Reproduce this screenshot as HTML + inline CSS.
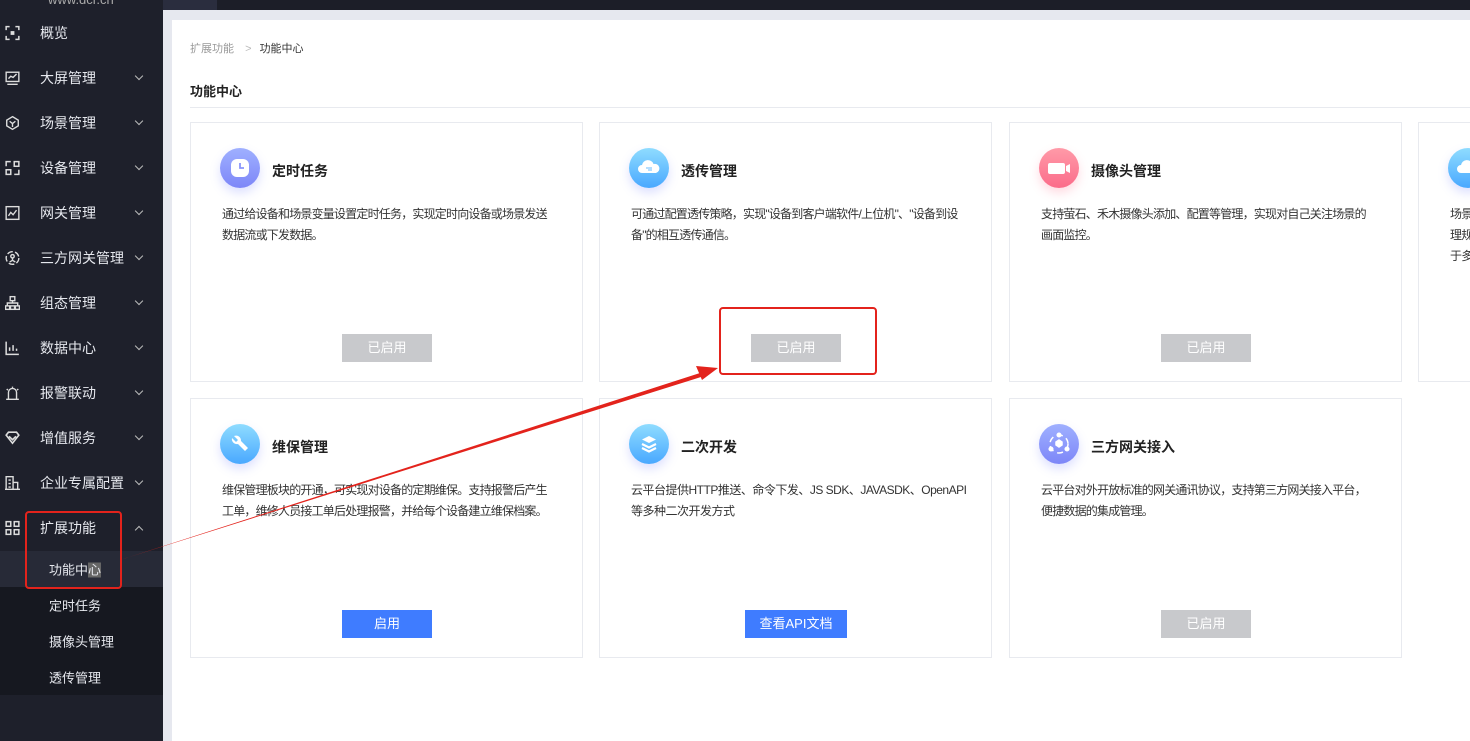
<!DOCTYPE html>
<html><head><meta charset="utf-8"><style>
*{margin:0;padding:0;box-sizing:border-box}
body{width:1470px;height:741px;overflow:hidden;position:relative;background:#e6e8ef;font-family:"Liberation Sans","Noto Sans CJK SC",sans-serif}
.side{position:absolute;left:0;top:0;width:163px;height:741px;background:#1e202b}
.mi{position:absolute;left:0;width:163px;height:45px;color:#e6e8ee;font-size:14px}
.mi .t{position:absolute;left:40px;top:50%;transform:translateY(-50%)}
.mi .ic{position:absolute;left:5px;top:50%;transform:translateY(-50%);width:15px;height:15px}
.mi .ch{position:absolute;left:136px;top:50%;margin-top:-5px;width:6px;height:6px;border-right:1.3px solid #bbb;border-bottom:1.3px solid #bbb;transform:rotate(45deg)}
.mi .ch.up{transform:rotate(-135deg);margin-top:-1px}
.sub{position:absolute;left:0;width:163px;height:36px;color:#e6e8ee;font-size:13px}
.sub span{position:absolute;left:49px;top:50%;transform:translateY(-50%)}
.topbar{position:absolute;left:163px;top:0;width:1307px;height:10px;background:#1c1e28}
.panel{position:absolute;left:172px;top:20px;width:1298px;height:721px;background:#fff}
.card{position:absolute;width:393px;height:260px;border:1px solid #e8eaef;background:#fff}
.card .icn{position:absolute;left:29px;top:25px;width:40px;height:40px;border-radius:50%;box-shadow:0 5px 10px rgba(120,130,255,.25)}
.card .ti{position:absolute;left:81px;top:38px;font-size:14px;font-weight:bold;color:#222}
.card .ds{position:absolute;left:31px;top:81px;width:330px;font-size:12px;letter-spacing:-0.8px;line-height:21px;color:#333}
.btn{position:absolute;top:211px;left:151px;width:90px;height:28px;line-height:28px;text-align:center;color:#fff;font-size:13px;background:#c8c9cc}
.btn.b{background:#3f7cff}
</style></head><body>
<div class="side">
 <div style="position:absolute;left:48px;top:-8px;color:#aaa;font-size:13px">www.dcr.cn</div>
 <div class="mi" style="top:10px"><svg class="ic" viewBox="0 0 13 13" fill="none" stroke="#ddd" stroke-width="1.3"><path d="M1 4V1h3M9 1h3v3M12 9v3H9M4 12H1V9"/><rect x="5.5" y="5.5" width="2" height="2" fill="#ddd"/></svg><span class="t">概览</span></div>
 <div class="mi" style="top:55px"><svg class="ic" viewBox="0 0 13 13" fill="none" stroke="#ddd" stroke-width="1.2"><rect x="1" y="1.5" width="11" height="8"/><path d="M3 7l2-2 2 1 3-3M2 12h9"/></svg><span class="t">大屏管理</span><i class="ch"></i></div>
 <div class="mi" style="top:100px"><svg class="ic" viewBox="0 0 13 13" fill="none" stroke="#ddd" stroke-width="1.2"><path d="M6.5 1l5 3v5l-5 3-5-3V4z M4 5l2.5 2 2.5-2M6.5 7v3"/></svg><span class="t">场景管理</span><i class="ch"></i></div>
 <div class="mi" style="top:145px"><svg class="ic" viewBox="0 0 13 13" fill="none" stroke="#ddd" stroke-width="1.3"><path d="M1 5V1h4M8 1h4v4h-4zM1 8h4v4H1zM12 8v4H8"/></svg><span class="t">设备管理</span><i class="ch"></i></div>
 <div class="mi" style="top:190px"><svg class="ic" viewBox="0 0 13 13" fill="none" stroke="#ddd" stroke-width="1.2"><rect x="1" y="1" width="11" height="11"/><path d="M3 9l2-3 2 2 3-4"/></svg><span class="t">网关管理</span><i class="ch"></i></div>
 <div class="mi" style="top:235px"><svg class="ic" viewBox="0 0 13 13" fill="none" stroke="#ddd" stroke-width="1.2"><circle cx="6.5" cy="6.5" r="5.5" stroke-dasharray="5 2"/><circle cx="6.5" cy="5" r="1.5"/><path d="M6.5 6.5v2M4 10l2.5-1.5L9 10"/></svg><span class="t">三方网关管理</span><i class="ch"></i></div>
 <div class="mi" style="top:280px"><svg class="ic" viewBox="0 0 13 13" fill="none" stroke="#ddd" stroke-width="1.2"><rect x="4.5" y="1" width="4" height="3.5"/><path d="M6.5 4.5v2M2 9V6.5h9V9"/><rect x="0.5" y="9" width="3.5" height="3"/><rect x="4.75" y="9" width="3.5" height="3"/><rect x="9" y="9" width="3.5" height="3"/></svg><span class="t">组态管理</span><i class="ch"></i></div>
 <div class="mi" style="top:325px"><svg class="ic" viewBox="0 0 13 13" fill="none" stroke="#ddd" stroke-width="1.3"><path d="M1 1v11h11M4 9V6M7 9V4M10 9V7"/></svg><span class="t">数据中心</span><i class="ch"></i></div>
 <div class="mi" style="top:370px"><svg class="ic" viewBox="0 0 13 13" fill="none" stroke="#ddd" stroke-width="1.2"><path d="M3 12V6a3.5 3.5 0 017 0v6M1 12h11M6.5 1V2M1.5 3l1 1M11.5 3l-1 1"/></svg><span class="t">报警联动</span><i class="ch"></i></div>
 <div class="mi" style="top:415px"><svg class="ic" viewBox="0 0 13 13" fill="none" stroke="#ddd" stroke-width="1.4"><path d="M1 4l2-2.5h7L12 4l-5.5 7z M3.5 5l3 3 3-3"/></svg><span class="t">增值服务</span><i class="ch"></i></div>
 <div class="mi" style="top:460px"><svg class="ic" viewBox="0 0 13 13" fill="none" stroke="#ddd" stroke-width="1.2"><path d="M1 12V1h6v11M7 6h4v6M0 12h13M3 4h2M3 7h2M3 10h2"/></svg><span class="t">企业专属配置</span><i class="ch"></i></div>
 <div class="mi" style="top:505px"><svg class="ic" viewBox="0 0 13 13" fill="none" stroke="#ddd" stroke-width="1.3"><rect x="1" y="1" width="4" height="4"/><rect x="8" y="1" width="4" height="4"/><rect x="1" y="8" width="4" height="4"/><rect x="8" y="8" width="4" height="4"/></svg><span class="t">扩展功能</span><i class="ch up"></i></div>
 <div style="position:absolute;left:0;top:551px;width:163px;height:144px;background:#161820"></div>
 <div class="sub" style="top:551px;background:#272a37"><span>功能中<b style="font-weight:normal;background:#666">心</b></span></div>
 <div class="sub" style="top:587px"><span>定时任务</span></div>
 <div class="sub" style="top:623px"><span>摄像头管理</span></div>
 <div class="sub" style="top:659px"><span>透传管理</span></div>
</div>
<div class="topbar"><div style="position:absolute;left:0;top:0;width:54px;height:10px;background:#2a2d3e"></div></div>
<div class="panel">
 <div style="position:absolute;left:18px;top:20px;font-size:11px;color:#999">扩展功能 <span style="margin:0 8px;color:#bbb">&gt;</span><span style="color:#333">功能中心</span></div>
 <div style="position:absolute;left:18px;top:61px;font-size:13px;font-weight:bold;color:#222">功能中心</div>
 <div style="position:absolute;left:18px;top:87px;width:1280px;height:1px;background:#e8eaef"></div>
</div>

<div class="card" style="left:190px;top:122px"><div class="icn" style="background:linear-gradient(#9fb0ff,#7d86f8)"><svg width="40" height="40" viewBox="0 0 40 40"><rect x="11" y="11" width="18" height="18" rx="6" fill="#fff"/><path d="M20 15v5h4" stroke="#8a95fb" stroke-width="1.8" fill="none"/></svg></div><div class="ti">定时任务</div><div class="ds">通过给设备和场景变量设置定时任务，实现定时向设备或场景发送数据流或下发数据。</div><div class="btn">已启用</div></div>
<div class="card" style="left:599px;top:122px"><div class="icn" style="background:linear-gradient(#8fdcff,#49a8ff)"><svg width="40" height="40" viewBox="0 0 40 40"><path d="M13 25a4 4 0 010-8 6 6 0 0111.5-1A4.5 4.5 0 0127 25z" fill="#fff"/><path d="M17 20h6M19 22h4" stroke="#6bbcff" stroke-width="1"/></svg></div><div class="ti">透传管理</div><div class="ds">可通过配置透传策略，实现"设备到客户端软件/上位机"、"设备到设备"的相互透传通信。</div><div class="btn">已启用</div></div>
<div class="card" style="left:1009px;top:122px"><div class="icn" style="background:linear-gradient(#ff9aa8,#fb6c8a);box-shadow:0 5px 10px rgba(255,110,140,.25)"><svg width="40" height="40" viewBox="0 0 40 40"><rect x="9" y="15" width="17" height="11" rx="2" fill="#fff"/><path d="M27 18l4-2v9l-4-2z" fill="#fff"/></svg></div><div class="ti">摄像头管理</div><div class="ds">支持萤石、禾木摄像头添加、配置等管理，实现对自己关注场景的画面监控。</div><div class="btn">已启用</div></div>
<div class="card" style="left:1418px;top:122px"><div class="icn" style="background:linear-gradient(#8fdcff,#49a8ff)"><svg width="40" height="40" viewBox="0 0 40 40"><path d="M13 25a4 4 0 010-8 6 6 0 0111.5-1A4.5 4.5 0 0127 25z" fill="#fff"/></svg></div><div class="ds" style="white-space:nowrap">场景<br>理规<br>于多</div></div>

<div class="card" style="left:190px;top:398px"><div class="icn" style="background:linear-gradient(#8fdcff,#49a8ff)"><svg width="40" height="40" viewBox="0 0 40 40"><path d="M14 12l4 4-2 2-4-4a5 5 0 006 6l7 7 3-3-7-7a5 5 0 00-7-5z" fill="#fff"/></svg></div><div class="ti">维保管理</div><div class="ds">维保管理板块的开通，可实现对设备的定期维保。支持报警后产生工单，维修人员接工单后处理报警，并给每个设备建立维保档案。</div><div class="btn b">启用</div></div>
<div class="card" style="left:599px;top:398px"><div class="icn" style="background:linear-gradient(#8fdcff,#49a8ff)"><svg width="40" height="40" viewBox="0 0 40 40"><path d="M20 12l7 3.5-7 3.5-7-3.5z" fill="#fff"/><path d="M13 20l7 3.5 7-3.5M13 24l7 3.5 7-3.5" stroke="#fff" stroke-width="2.2" fill="none"/></svg></div><div class="ti">二次开发</div><div class="ds" style="width:345px;letter-spacing:-0.5px">云平台提供HTTP推送、命令下发、JS SDK、JAVASDK、OpenAPI等多种二次开发方式</div><div class="btn b" style="left:145px;width:102px">查看API文档</div></div>
<div class="card" style="left:1009px;top:398px"><div class="icn" style="background:linear-gradient(#9fb0ff,#7d86f8)"><svg width="40" height="40" viewBox="0 0 40 40" fill="none" stroke="#fff" stroke-width="1.5"><circle cx="20" cy="20" r="9" stroke-dasharray="6 4"/><path d="M17 18l3-2 3 2v3l-3 2-3-2z" fill="#fff"/><circle cx="20" cy="11" r="1.8" fill="#fff"/><circle cx="12" cy="25" r="1.8" fill="#fff"/><circle cx="28" cy="25" r="1.8" fill="#fff"/></svg></div><div class="ti">三方网关接入</div><div class="ds">云平台对外开放标准的网关通讯协议，支持第三方网关接入平台，便捷数据的集成管理。</div><div class="btn">已启用</div></div>

<svg style="position:absolute;left:0;top:0" width="1470" height="741">
<rect x="26" y="512" width="95" height="76" rx="3" fill="none" stroke="#e3231c" stroke-width="2"/>
<rect x="720" y="308" width="156" height="66" rx="3" fill="none" stroke="#e3231c" stroke-width="2"/>
<polygon points="120,560 700,373 701,377" fill="#e3231c"/>
<polygon points="718,368 696,366 702,380" fill="#e3231c"/>
</svg>
</body></html>
